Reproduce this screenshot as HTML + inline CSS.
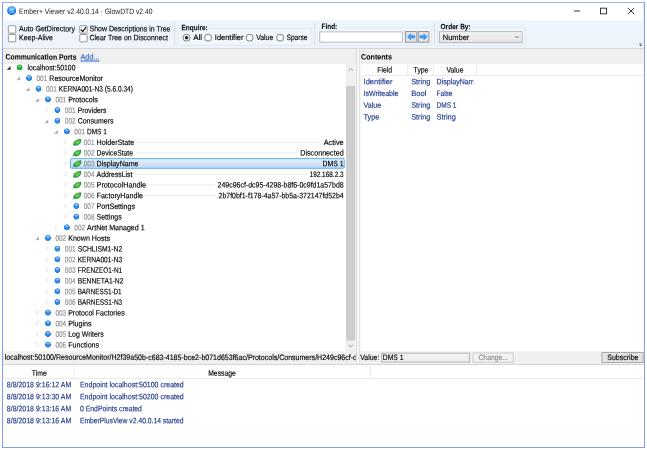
<!DOCTYPE html>
<html><head><meta charset="utf-8"><title>Ember+ Viewer</title>
<style>
html,body{margin:0;padding:0;background:#fff}
body{width:647px;height:450px;overflow:hidden;position:relative;font-family:"Liberation Sans",sans-serif;font-size:7.8px;line-height:10px}
div,span,body>svg{position:absolute;display:block}
#t{left:0;top:0;width:647px;height:450px;will-change:transform}
span{left:0;top:0;white-space:pre;transform-origin:0 0;-webkit-text-stroke:0.15px currentColor;text-rendering:geometricPrecision}
</style></head>
<body>
<svg style="left:0;top:0" width="647" height="450" viewBox="0 0 647 450"><defs><radialGradient id="bg" cx="0.5" cy="0.5" r="0.5"><stop offset="0" stop-color="#3f9af0"/><stop offset="0.62" stop-color="#2585e2"/><stop offset="0.8" stop-color="#1f78d6" stop-opacity="0.9"/><stop offset="1" stop-color="#1f78d6" stop-opacity="0"/></radialGradient><radialGradient id="gg" cx="0.5" cy="0.5" r="0.5"><stop offset="0" stop-color="#2ec03a"/><stop offset="0.62" stop-color="#1fae2e"/><stop offset="0.8" stop-color="#1ba02a" stop-opacity="0.9"/><stop offset="1" stop-color="#1ba02a" stop-opacity="0"/></radialGradient><radialGradient id="tg" cx="0.5" cy="0.45" r="0.6"><stop offset="0" stop-color="#6cc0fb"/><stop offset="0.6" stop-color="#2b8be8"/><stop offset="1" stop-color="#1763c2"/></radialGradient><radialGradient id="lg" cx="0.5" cy="0.45" r="0.6"><stop offset="0" stop-color="#74d45c"/><stop offset="0.6" stop-color="#4cba42"/><stop offset="1" stop-color="#2f9a30"/></radialGradient><linearGradient id="g1" x1="0" y1="0" x2="0" y2="1"><stop offset="0" stop-color="#e6eaf0"/><stop offset="0.5" stop-color="#cdcdcd"/><stop offset="1" stop-color="#e6e6e6"/></linearGradient><linearGradient id="g2" x1="0" y1="0" x2="0" y2="1"><stop offset="0" stop-color="#f3f3f3"/><stop offset="1" stop-color="#e4e4e4"/></linearGradient><linearGradient id="g3" x1="0" y1="0" x2="0" y2="1"><stop offset="0" stop-color="#e4f1fd"/><stop offset="1" stop-color="#bedcf8"/></linearGradient></defs>
<rect x="2" y="2" width="643" height="446" fill="#7da2e3"/>
<rect x="3" y="2.8" width="640.8" height="444" fill="#fff"/>
<svg x="7" y="6" width="9.3" height="9.3" viewBox="0 0 20 20"><circle cx="10" cy="10" r="9.7" fill="url(#tg)"/><ellipse cx="10" cy="5.6" rx="6.4" ry="3.6" fill="#fff" opacity="0.35"/><path d="M4 11C7 9 12 9.5 16 12M6 15C9 13.4 12 13.6 15 15.4" stroke="#bfe4ff" stroke-width="1.1" fill="none" opacity="0.7"/></svg>
<g stroke="#2e2e2e" stroke-width="0.95" fill="none"><path d="M573.9 11H580.1"/><rect x="600.5" y="8.2" width="6" height="5.6"/><path d="M627.8 8L634.2 14.1M634.2 8L627.8 14.1"/></g>
<rect x="2.8" y="20.4" width="640.4" height="27.9" fill="#eef4fb"/>
<rect x="3" y="47.9" width="641" height="1.7" fill="url(#g1)"/>
<rect x="3" y="49.5" width="641" height="314.9" fill="#f0f0f0"/>
<rect x="8.35" y="25.75" width="7.4" height="7.4" fill="#fff" stroke="#8a8a8a" stroke-width="0.9" rx="0.8"/>
<rect x="8.35" y="34.45" width="7.4" height="7.4" fill="#fff" stroke="#8a8a8a" stroke-width="0.9" rx="0.8"/>
<rect x="79.75" y="25.75" width="7.4" height="7.4" fill="#fff" stroke="#8a8a8a" stroke-width="0.9" rx="0.8"/>
<svg x="79.3" y="25.3" width="8.3" height="8.3" viewBox="0 0 12 12"><path d="M2.4 6L5 9L9.8 2.6" stroke="#1a1a1a" stroke-width="1.9" fill="none"/></svg>
<rect x="79.75" y="34.45" width="7.4" height="7.4" fill="#fff" stroke="#8a8a8a" stroke-width="0.9" rx="0.8"/>
<rect x="174.4" y="23" width="0.8" height="22.4" fill="#d2dae5"/>
<rect x="314.5" y="23" width="0.8" height="22.4" fill="#d2dae5"/>
<rect x="434.2" y="23" width="0.8" height="22.4" fill="#d2dae5"/>
<rect x="177.85" y="28.65" width="134.1" height="16.6" fill="#f1f6fc" stroke="#dde4ee" stroke-width="0.7" rx="1.5"/>
<rect x="180.5" y="27.3" width="28.5" height="2.5" fill="#eef4fb"/>
<rect x="317.65" y="27.85" width="113.8" height="17.6" fill="#f1f6fc" stroke="#dde4ee" stroke-width="0.7" rx="1.5"/>
<rect x="320" y="26.5" width="18.5" height="2.5" fill="#eef4fb"/>
<rect x="437.65" y="27.85" width="87.4" height="17.6" fill="#f1f6fc" stroke="#dde4ee" stroke-width="0.7" rx="1.5"/>
<rect x="439.5" y="26.5" width="32.5" height="2.5" fill="#eef4fb"/>
<circle cx="186.6" cy="37.7" r="3.5" fill="#fff" stroke="#606060" stroke-width="0.8"/>
<circle cx="186.6" cy="37.7" r="1.8" fill="#222"/>
<circle cx="208.1" cy="37.7" r="3.5" fill="#fff" stroke="#606060" stroke-width="0.8"/>
<circle cx="249.6" cy="37.7" r="3.5" fill="#fff" stroke="#606060" stroke-width="0.8"/>
<circle cx="280.1" cy="37.7" r="3.5" fill="#fff" stroke="#606060" stroke-width="0.8"/>
<rect x="319.8" y="31.9" width="82.5" height="10.3" fill="#fff" stroke="#a9adb5" stroke-width="0.8"/>
<rect x="405.3" y="31.6" width="11.6" height="10.6" fill="#dfe1e4" stroke="#7d838c" stroke-width="0.8"/>
<svg x="406.9" y="33.1" width="8.4" height="7.4" viewBox="0 0 10.6 9"><path d="M0.6 4.5L5 0.6V3H10V6H5V8.4Z" fill="#3a9df5" stroke="#2a84e0" stroke-width="0.5"/></svg>
<rect x="418.2" y="31.6" width="10.7" height="10.6" fill="#dfe1e4" stroke="#7d838c" stroke-width="0.8"/>
<svg x="419.35" y="33.1" width="8.4" height="7.4" viewBox="0 0 10.6 9"><path d="M10 4.5L5.6 0.6V3H0.6V6H5.6V8.4Z" fill="#3a9df5" stroke="#2a84e0" stroke-width="0.5"/></svg>
<rect x="439.5" y="31.7" width="82.6" height="11" fill="url(#g2)" stroke="#adadad" stroke-width="0.8"/>
<svg x="514.8" y="35.4" width="4.4" height="3.2" viewBox="0 0 10 7"><path d="M1 1L5 5.6L9 1" stroke="#555" stroke-width="1.6" fill="none"/></svg>
<svg x="638.8" y="42.6" width="3.6" height="4.4" viewBox="0 0 6.8 8.8"><path d="M0.6 1.4H6.2" stroke="#999" stroke-width="1.6"/><path d="M0.6 3.6H6.2L3.4 7.6Z" fill="#444"/></svg>
<rect x="3" y="64" width="343" height="287.2" fill="#fff"/>
<rect x="346" y="64" width="9.2" height="287.2" fill="#f0f0f0"/>
<rect x="355.2" y="64" width="1.2" height="287.2" fill="#f8f8f8"/>
<rect x="346" y="86" width="9.2" height="254.5" fill="#cdcdcd"/>
<svg x="348.1" y="67.8" width="5.4" height="3.4" viewBox="0 0 10.8 6.8"><path d="M1 5.8L5.4 1.4L9.8 5.8" stroke="#6a6a6a" stroke-width="1.3" fill="none"/></svg>
<svg x="348.1" y="344.2" width="5.4" height="3.4" viewBox="0 0 10.8 6.8"><path d="M1 1L5.4 5.4L9.8 1" stroke="#6a6a6a" stroke-width="1.3" fill="none"/></svg>
<rect x="356.5" y="49" width="0.8" height="315.4" fill="#c6c6c6"/>
<rect x="357.3" y="48.6" width="1.9" height="316.4" fill="#fbfbfb"/>
<rect x="359.2" y="49" width="0.8" height="315.4" fill="#dadada"/>
<rect x="3" y="364" width="641" height="1" fill="#d4d4d4"/>
<rect x="360.6" y="64.3" width="282.8" height="286.9" fill="#fff"/>
<rect x="360.4" y="75" width="283.2" height="0.7" fill="#e2e2e2"/>
<rect x="407.3" y="64.5" width="0.7" height="10.5" fill="#e2e2e2"/>
<rect x="432.9" y="64.5" width="0.7" height="10.5" fill="#e2e2e2"/>
<rect x="476" y="64.5" width="0.7" height="10.5" fill="#e2e2e2"/>
<svg x="6.5" y="65.7" width="4.4" height="4.2" viewBox="0 0 8 8"><path d="M7.6 0.4V7.6H0.4Z" fill="#262626"/></svg>
<svg x="16.3" y="64.1" width="6.6" height="6.6" viewBox="0 0 16 16"><circle cx="8" cy="8" r="8" fill="url(#gg)"/><ellipse cx="8" cy="4.9" rx="4.2" ry="2.2" fill="#fff" opacity="0.5"/></svg>
<svg x="15.95" y="76.36" width="4.4" height="4.2" viewBox="0 0 8 8"><path d="M7.6 0.4V7.6H0.4Z" fill="#a8a8a8"/></svg>
<svg x="25.75" y="74.76" width="6.6" height="6.6" viewBox="0 0 16 16"><circle cx="8" cy="8" r="8" fill="url(#bg)"/><ellipse cx="8" cy="4.9" rx="4.2" ry="2.2" fill="#fff" opacity="0.5"/></svg>
<svg x="25.4" y="87.03" width="4.4" height="4.2" viewBox="0 0 8 8"><path d="M7.6 0.4V7.6H0.4Z" fill="#a8a8a8"/></svg>
<svg x="35.2" y="85.43" width="6.6" height="6.6" viewBox="0 0 16 16"><circle cx="8" cy="8" r="8" fill="url(#bg)"/><ellipse cx="8" cy="4.9" rx="4.2" ry="2.2" fill="#fff" opacity="0.5"/></svg>
<svg x="34.85" y="97.69" width="4.4" height="4.2" viewBox="0 0 8 8"><path d="M7.6 0.4V7.6H0.4Z" fill="#a8a8a8"/></svg>
<svg x="44.65" y="96.09" width="6.6" height="6.6" viewBox="0 0 16 16"><circle cx="8" cy="8" r="8" fill="url(#bg)"/><ellipse cx="8" cy="4.9" rx="4.2" ry="2.2" fill="#fff" opacity="0.5"/></svg>
<svg x="45.4" y="107.35" width="3.4" height="5.4" viewBox="0 0 6.8 10.8"><path d="M1 1L5.8 5.4L1 9.8Z" fill="#fff" stroke="#d8d8d8" stroke-width="1.1"/></svg>
<svg x="54.1" y="106.75" width="6.6" height="6.6" viewBox="0 0 16 16"><circle cx="8" cy="8" r="8" fill="url(#bg)"/><ellipse cx="8" cy="4.9" rx="4.2" ry="2.2" fill="#fff" opacity="0.5"/></svg>
<svg x="44.3" y="119.02" width="4.4" height="4.2" viewBox="0 0 8 8"><path d="M7.6 0.4V7.6H0.4Z" fill="#a8a8a8"/></svg>
<svg x="54.1" y="117.42" width="6.6" height="6.6" viewBox="0 0 16 16"><circle cx="8" cy="8" r="8" fill="url(#bg)"/><ellipse cx="8" cy="4.9" rx="4.2" ry="2.2" fill="#fff" opacity="0.5"/></svg>
<svg x="53.75" y="129.68" width="4.4" height="4.2" viewBox="0 0 8 8"><path d="M7.6 0.4V7.6H0.4Z" fill="#a8a8a8"/></svg>
<svg x="63.55" y="128.08" width="6.6" height="6.6" viewBox="0 0 16 16"><circle cx="8" cy="8" r="8" fill="url(#bg)"/><ellipse cx="8" cy="4.9" rx="4.2" ry="2.2" fill="#fff" opacity="0.5"/></svg>
<svg x="64.3" y="139.34" width="3.4" height="5.4" viewBox="0 0 6.8 10.8"><path d="M1 1L5.8 5.4L1 9.8Z" fill="#fff" stroke="#d8d8d8" stroke-width="1.1"/></svg>
<svg x="72.2" y="138.74" width="9.2" height="7.9" viewBox="0 0 24 20"><path d="M4 15.2C2.6 8 9 2.2 23.2 1.2C23.8 9 19 16.2 11 16.8C8 17 6 16.4 4 15.2Z" fill="url(#lg)" stroke="#21782a" stroke-width="1.6"/><path d="M4.6 14.6L0.8 19.2" stroke="#2d7d2d" stroke-width="1.4" fill="none"/></svg>
<svg x="64.3" y="150" width="3.4" height="5.4" viewBox="0 0 6.8 10.8"><path d="M1 1L5.8 5.4L1 9.8Z" fill="#fff" stroke="#d8d8d8" stroke-width="1.1"/></svg>
<svg x="72.2" y="149.4" width="9.2" height="7.9" viewBox="0 0 24 20"><path d="M4 15.2C2.6 8 9 2.2 23.2 1.2C23.8 9 19 16.2 11 16.8C8 17 6 16.4 4 15.2Z" fill="url(#lg)" stroke="#21782a" stroke-width="1.6"/><path d="M4.6 14.6L0.8 19.2" stroke="#2d7d2d" stroke-width="1.4" fill="none"/></svg>
<rect x="70.42" y="158.64" width="273.85" height="9.65" fill="url(#g3)" stroke="#44a0f2" stroke-width="0.85" rx="1.2"/>
<svg x="64.3" y="160.67" width="3.4" height="5.4" viewBox="0 0 6.8 10.8"><path d="M1 1L5.8 5.4L1 9.8Z" fill="#fff" stroke="#d8d8d8" stroke-width="1.1"/></svg>
<svg x="72.2" y="160.07" width="9.2" height="7.9" viewBox="0 0 24 20"><path d="M4 15.2C2.6 8 9 2.2 23.2 1.2C23.8 9 19 16.2 11 16.8C8 17 6 16.4 4 15.2Z" fill="url(#lg)" stroke="#21782a" stroke-width="1.6"/><path d="M4.6 14.6L0.8 19.2" stroke="#2d7d2d" stroke-width="1.4" fill="none"/></svg>
<svg x="64.3" y="171.33" width="3.4" height="5.4" viewBox="0 0 6.8 10.8"><path d="M1 1L5.8 5.4L1 9.8Z" fill="#fff" stroke="#d8d8d8" stroke-width="1.1"/></svg>
<svg x="72.2" y="170.73" width="9.2" height="7.9" viewBox="0 0 24 20"><path d="M4 15.2C2.6 8 9 2.2 23.2 1.2C23.8 9 19 16.2 11 16.8C8 17 6 16.4 4 15.2Z" fill="url(#lg)" stroke="#21782a" stroke-width="1.6"/><path d="M4.6 14.6L0.8 19.2" stroke="#2d7d2d" stroke-width="1.4" fill="none"/></svg>
<svg x="64.3" y="181.99" width="3.4" height="5.4" viewBox="0 0 6.8 10.8"><path d="M1 1L5.8 5.4L1 9.8Z" fill="#fff" stroke="#d8d8d8" stroke-width="1.1"/></svg>
<svg x="72.2" y="181.39" width="9.2" height="7.9" viewBox="0 0 24 20"><path d="M4 15.2C2.6 8 9 2.2 23.2 1.2C23.8 9 19 16.2 11 16.8C8 17 6 16.4 4 15.2Z" fill="url(#lg)" stroke="#21782a" stroke-width="1.6"/><path d="M4.6 14.6L0.8 19.2" stroke="#2d7d2d" stroke-width="1.4" fill="none"/></svg>
<svg x="64.3" y="192.66" width="3.4" height="5.4" viewBox="0 0 6.8 10.8"><path d="M1 1L5.8 5.4L1 9.8Z" fill="#fff" stroke="#d8d8d8" stroke-width="1.1"/></svg>
<svg x="72.2" y="192.06" width="9.2" height="7.9" viewBox="0 0 24 20"><path d="M4 15.2C2.6 8 9 2.2 23.2 1.2C23.8 9 19 16.2 11 16.8C8 17 6 16.4 4 15.2Z" fill="url(#lg)" stroke="#21782a" stroke-width="1.6"/><path d="M4.6 14.6L0.8 19.2" stroke="#2d7d2d" stroke-width="1.4" fill="none"/></svg>
<svg x="64.3" y="203.32" width="3.4" height="5.4" viewBox="0 0 6.8 10.8"><path d="M1 1L5.8 5.4L1 9.8Z" fill="#fff" stroke="#d8d8d8" stroke-width="1.1"/></svg>
<svg x="73" y="202.72" width="6.6" height="6.6" viewBox="0 0 16 16"><circle cx="8" cy="8" r="8" fill="url(#bg)"/><ellipse cx="8" cy="4.9" rx="4.2" ry="2.2" fill="#fff" opacity="0.5"/></svg>
<svg x="64.3" y="213.98" width="3.4" height="5.4" viewBox="0 0 6.8 10.8"><path d="M1 1L5.8 5.4L1 9.8Z" fill="#fff" stroke="#d8d8d8" stroke-width="1.1"/></svg>
<svg x="73" y="213.38" width="6.6" height="6.6" viewBox="0 0 16 16"><circle cx="8" cy="8" r="8" fill="url(#bg)"/><ellipse cx="8" cy="4.9" rx="4.2" ry="2.2" fill="#fff" opacity="0.5"/></svg>
<svg x="54.85" y="224.65" width="3.4" height="5.4" viewBox="0 0 6.8 10.8"><path d="M1 1L5.8 5.4L1 9.8Z" fill="#fff" stroke="#d8d8d8" stroke-width="1.1"/></svg>
<svg x="63.55" y="224.04" width="6.6" height="6.6" viewBox="0 0 16 16"><circle cx="8" cy="8" r="8" fill="url(#bg)"/><ellipse cx="8" cy="4.9" rx="4.2" ry="2.2" fill="#fff" opacity="0.5"/></svg>
<svg x="34.85" y="236.31" width="4.4" height="4.2" viewBox="0 0 8 8"><path d="M7.6 0.4V7.6H0.4Z" fill="#a8a8a8"/></svg>
<svg x="44.65" y="234.71" width="6.6" height="6.6" viewBox="0 0 16 16"><circle cx="8" cy="8" r="8" fill="url(#bg)"/><ellipse cx="8" cy="4.9" rx="4.2" ry="2.2" fill="#fff" opacity="0.5"/></svg>
<svg x="45.4" y="245.97" width="3.4" height="5.4" viewBox="0 0 6.8 10.8"><path d="M1 1L5.8 5.4L1 9.8Z" fill="#fff" stroke="#d8d8d8" stroke-width="1.1"/></svg>
<svg x="54.1" y="245.37" width="6.6" height="6.6" viewBox="0 0 16 16"><circle cx="8" cy="8" r="8" fill="url(#bg)"/><ellipse cx="8" cy="4.9" rx="4.2" ry="2.2" fill="#fff" opacity="0.5"/></svg>
<svg x="45.4" y="256.63" width="3.4" height="5.4" viewBox="0 0 6.8 10.8"><path d="M1 1L5.8 5.4L1 9.8Z" fill="#fff" stroke="#d8d8d8" stroke-width="1.1"/></svg>
<svg x="54.1" y="256.03" width="6.6" height="6.6" viewBox="0 0 16 16"><circle cx="8" cy="8" r="8" fill="url(#bg)"/><ellipse cx="8" cy="4.9" rx="4.2" ry="2.2" fill="#fff" opacity="0.5"/></svg>
<svg x="45.4" y="267.3" width="3.4" height="5.4" viewBox="0 0 6.8 10.8"><path d="M1 1L5.8 5.4L1 9.8Z" fill="#fff" stroke="#d8d8d8" stroke-width="1.1"/></svg>
<svg x="54.1" y="266.7" width="6.6" height="6.6" viewBox="0 0 16 16"><circle cx="8" cy="8" r="8" fill="url(#bg)"/><ellipse cx="8" cy="4.9" rx="4.2" ry="2.2" fill="#fff" opacity="0.5"/></svg>
<svg x="45.4" y="277.96" width="3.4" height="5.4" viewBox="0 0 6.8 10.8"><path d="M1 1L5.8 5.4L1 9.8Z" fill="#fff" stroke="#d8d8d8" stroke-width="1.1"/></svg>
<svg x="54.1" y="277.36" width="6.6" height="6.6" viewBox="0 0 16 16"><circle cx="8" cy="8" r="8" fill="url(#bg)"/><ellipse cx="8" cy="4.9" rx="4.2" ry="2.2" fill="#fff" opacity="0.5"/></svg>
<svg x="45.4" y="288.62" width="3.4" height="5.4" viewBox="0 0 6.8 10.8"><path d="M1 1L5.8 5.4L1 9.8Z" fill="#fff" stroke="#d8d8d8" stroke-width="1.1"/></svg>
<svg x="54.1" y="288.02" width="6.6" height="6.6" viewBox="0 0 16 16"><circle cx="8" cy="8" r="8" fill="url(#bg)"/><ellipse cx="8" cy="4.9" rx="4.2" ry="2.2" fill="#fff" opacity="0.5"/></svg>
<svg x="45.4" y="299.29" width="3.4" height="5.4" viewBox="0 0 6.8 10.8"><path d="M1 1L5.8 5.4L1 9.8Z" fill="#fff" stroke="#d8d8d8" stroke-width="1.1"/></svg>
<svg x="54.1" y="298.69" width="6.6" height="6.6" viewBox="0 0 16 16"><circle cx="8" cy="8" r="8" fill="url(#bg)"/><ellipse cx="8" cy="4.9" rx="4.2" ry="2.2" fill="#fff" opacity="0.5"/></svg>
<svg x="35.95" y="309.95" width="3.4" height="5.4" viewBox="0 0 6.8 10.8"><path d="M1 1L5.8 5.4L1 9.8Z" fill="#fff" stroke="#d8d8d8" stroke-width="1.1"/></svg>
<svg x="44.65" y="309.35" width="6.6" height="6.6" viewBox="0 0 16 16"><circle cx="8" cy="8" r="8" fill="url(#bg)"/><ellipse cx="8" cy="4.9" rx="4.2" ry="2.2" fill="#fff" opacity="0.5"/></svg>
<svg x="35.95" y="320.61" width="3.4" height="5.4" viewBox="0 0 6.8 10.8"><path d="M1 1L5.8 5.4L1 9.8Z" fill="#fff" stroke="#d8d8d8" stroke-width="1.1"/></svg>
<svg x="44.65" y="320.01" width="6.6" height="6.6" viewBox="0 0 16 16"><circle cx="8" cy="8" r="8" fill="url(#bg)"/><ellipse cx="8" cy="4.9" rx="4.2" ry="2.2" fill="#fff" opacity="0.5"/></svg>
<svg x="35.95" y="331.27" width="3.4" height="5.4" viewBox="0 0 6.8 10.8"><path d="M1 1L5.8 5.4L1 9.8Z" fill="#fff" stroke="#d8d8d8" stroke-width="1.1"/></svg>
<svg x="44.65" y="330.67" width="6.6" height="6.6" viewBox="0 0 16 16"><circle cx="8" cy="8" r="8" fill="url(#bg)"/><ellipse cx="8" cy="4.9" rx="4.2" ry="2.2" fill="#fff" opacity="0.5"/></svg>
<svg x="35.95" y="341.94" width="3.4" height="5.4" viewBox="0 0 6.8 10.8"><path d="M1 1L5.8 5.4L1 9.8Z" fill="#fff" stroke="#d8d8d8" stroke-width="1.1"/></svg>
<svg x="44.65" y="341.34" width="6.6" height="6.6" viewBox="0 0 16 16"><circle cx="8" cy="8" r="8" fill="url(#bg)"/><ellipse cx="8" cy="4.9" rx="4.2" ry="2.2" fill="#fff" opacity="0.5"/></svg>
<rect x="381.7" y="353.1" width="87.7" height="8.9" fill="#f0f0f0" stroke="#a8a8a8" stroke-width="0.8"/>
<rect x="473.1" y="353" width="40.1" height="9.2" fill="#f2f2f2" stroke="#c4c4c4" stroke-width="0.8"/>
<rect x="601.9" y="352.6" width="41.2" height="10" fill="#e3e3e3" stroke="#9c9c9c" stroke-width="0.8"/>
<rect x="3" y="365" width="641" height="82" fill="#fff"/>
<rect x="3" y="378" width="641" height="0.7" fill="#e4e4e4"/>
<rect x="73.7" y="365.4" width="0.7" height="12.6" fill="#e4e4e4"/>
<rect x="370.2" y="365.4" width="0.7" height="12.6" fill="#e4e4e4"/>
<rect x="136.65" y="141.94" width="184.60" height="0.7" fill="#e2e2e2"/>
<rect x="135.45" y="152.60" width="162.30" height="0.7" fill="#e2e2e2"/>
<rect x="140.95" y="163.27" width="179.10" height="0.7" fill="#e2e2e2"/>
<rect x="134.95" y="173.93" width="172.10" height="0.7" fill="#e2e2e2"/>
<rect x="148.65" y="184.59" width="66.40" height="0.7" fill="#e2e2e2"/>
<rect x="145.45" y="195.26" width="70.60" height="0.7" fill="#e2e2e2"/>
</svg>
<div id="t">
<span style="color:#222;transform:translate(19.05px,6.90px) scaleX(0.8667) rotate(.03deg);-webkit-text-stroke:0;">Ember+ Viewer v2.40.0.14 - GlowDTD v2.40</span>
<span style="color:#000;transform:translate(19.05px,24.35px) scaleX(0.9021) rotate(.03deg);">Auto GetDirectory</span>
<span style="color:#000;transform:translate(19.05px,33.30px) scaleX(0.8988) rotate(.03deg);">Keep-Alive</span>
<span style="color:#000;transform:translate(89.55px,24.35px) scaleX(0.8932) rotate(.03deg);">Show Descriptions in Tree</span>
<span style="color:#000;transform:translate(89.55px,33.30px) scaleX(0.8911) rotate(.03deg);">Clear Tree on Disconnect</span>
<span style="color:#000;transform:translate(181.55px,23.20px) scaleX(0.8253) rotate(.03deg);font-weight:bold;-webkit-text-stroke:0.05px;">Enquire:</span>
<span style="color:#000;transform:translate(193.15px,33.00px) scaleX(1.0378) rotate(.03deg);">All</span>
<span style="color:#000;transform:translate(214.85px,33.00px) scaleX(0.9563) rotate(.03deg);">Identifier</span>
<span style="color:#000;transform:translate(256.15px,33.00px) scaleX(0.8826) rotate(.03deg);">Value</span>
<span style="color:#000;transform:translate(286.55px,33.00px) scaleX(0.8455) rotate(.03deg);">Sparse</span>
<span style="color:#000;transform:translate(321.55px,21.90px) scaleX(0.8236) rotate(.03deg);font-weight:bold;-webkit-text-stroke:0.05px;">Find:</span>
<span style="color:#000;transform:translate(440.55px,22.20px) scaleX(0.8368) rotate(.03deg);font-weight:bold;-webkit-text-stroke:0.05px;">Order By:</span>
<span style="color:#000;transform:translate(442.75px,32.90px) scaleX(0.9591) rotate(.03deg);">Number</span>
<span style="color:#000;transform:translate(5.55px,52.60px) scaleX(0.8751) rotate(.03deg);font-weight:bold;-webkit-text-stroke:0.05px;">Communication Ports</span>
<span style="color:#2a63d8;transform:translate(80.55px,52.60px) scaleX(0.9276) rotate(.03deg);text-decoration:underline;">Add...</span>
<span style="color:#000;transform:translate(361.05px,52.60px) scaleX(0.9143) rotate(.03deg);font-weight:bold;-webkit-text-stroke:0.05px;">Contents</span>
<span style="color:#000;transform:translate(377.30px,65.60px) scaleX(0.8750) rotate(.03deg);">Field</span>
<span style="color:#000;transform:translate(413.60px,65.60px) scaleX(0.8750) rotate(.03deg);">Type</span>
<span style="color:#000;transform:translate(446.52px,65.60px) scaleX(0.8750) rotate(.03deg);">Value</span>
<span style="color:#1c378a;transform:translate(363.55px,77.30px) scaleX(0.9664) rotate(.03deg);">Identifier</span>
<span style="color:#1c378a;transform:translate(411.25px,77.30px) scaleX(0.9325) rotate(.03deg);">String</span>
<div style="left:430px;top:76px;width:44px;height:14px;clip-path:inset(0 0.70px 0 0)"><span style="color:#1c378a;transform:translate(6.55px,1.30px) scaleX(0.9073) rotate(.03deg);">DisplayName</span></div>
<span style="color:#1c378a;transform:translate(363.55px,89.07px) scaleX(0.8981) rotate(.03deg);">IsWriteable</span>
<span style="color:#1c378a;transform:translate(411.25px,89.07px) scaleX(0.9674) rotate(.03deg);">Bool</span>
<span style="color:#1c378a;transform:translate(436.55px,89.07px) scaleX(0.8334) rotate(.03deg);">False</span>
<span style="color:#1c378a;transform:translate(363.55px,100.84px) scaleX(0.9084) rotate(.03deg);">Value</span>
<span style="color:#1c378a;transform:translate(411.25px,100.84px) scaleX(0.9325) rotate(.03deg);">String</span>
<span style="color:#1c378a;transform:translate(436.55px,100.84px) scaleX(0.8346) rotate(.03deg);">DMS 1</span>
<span style="color:#1c378a;transform:translate(363.55px,112.61px) scaleX(0.9405) rotate(.03deg);">Type</span>
<span style="color:#1c378a;transform:translate(411.25px,112.61px) scaleX(0.9325) rotate(.03deg);">String</span>
<span style="color:#1c378a;transform:translate(436.55px,112.61px) scaleX(0.9423) rotate(.03deg);">String</span>
<span style="color:#000;transform:translate(27.45px,63.25px) scaleX(0.8787) rotate(.03deg);">localhost:50100</span>
<span style="color:#8c8c8c;transform:translate(36.50px,73.91px) scaleX(0.8298) rotate(.03deg);">001</span>
<span style="color:#000;transform:translate(49.30px,73.91px) scaleX(0.9036) rotate(.03deg);">ResourceMonitor</span>
<span style="color:#8c8c8c;transform:translate(45.95px,84.58px) scaleX(0.8298) rotate(.03deg);">001</span>
<span style="color:#000;transform:translate(58.75px,84.58px) scaleX(0.8433) rotate(.03deg);">KERNA001-N3 (5.6.0.34)</span>
<span style="color:#8c8c8c;transform:translate(55.40px,95.24px) scaleX(0.8298) rotate(.03deg);">001</span>
<span style="color:#000;transform:translate(68.20px,95.24px) scaleX(0.9149) rotate(.03deg);">Protocols</span>
<span style="color:#8c8c8c;transform:translate(64.85px,105.90px) scaleX(0.8298) rotate(.03deg);">001</span>
<span style="color:#000;transform:translate(77.65px,105.90px) scaleX(0.8744) rotate(.03deg);">Providers</span>
<span style="color:#8c8c8c;transform:translate(64.85px,116.56px) scaleX(0.8298) rotate(.03deg);">002</span>
<span style="color:#000;transform:translate(77.65px,116.56px) scaleX(0.8978) rotate(.03deg);">Consumers</span>
<span style="color:#8c8c8c;transform:translate(74.30px,127.23px) scaleX(0.8298) rotate(.03deg);">001</span>
<span style="color:#000;transform:translate(87.10px,127.23px) scaleX(0.8241) rotate(.03deg);">DMS 1</span>
<span style="color:#8c8c8c;transform:translate(83.75px,137.89px) scaleX(0.8298) rotate(.03deg);">001</span>
<span style="color:#000;transform:translate(96.55px,137.89px) scaleX(0.9129) rotate(.03deg);">HolderState</span>
<span style="color:#000;transform:translate(323.75px,137.89px) scaleX(0.9372) rotate(.03deg);">Active</span>
<span style="color:#8c8c8c;transform:translate(83.75px,148.55px) scaleX(0.8298) rotate(.03deg);">002</span>
<span style="color:#000;transform:translate(96.55px,148.55px) scaleX(0.8657) rotate(.03deg);">DeviceState</span>
<span style="color:#000;transform:translate(300.25px,148.55px) scaleX(0.9185) rotate(.03deg);">Disconnected</span>
<span style="color:#8c8c8c;transform:translate(83.75px,159.22px) scaleX(0.8298) rotate(.03deg);">003</span>
<span style="color:#000;transform:translate(96.55px,159.22px) scaleX(0.9035) rotate(.03deg);">DisplayName</span>
<span style="color:#000;transform:translate(322.55px,159.22px) scaleX(0.8849) rotate(.03deg);">DMS 1</span>
<span style="color:#8c8c8c;transform:translate(83.75px,169.88px) scaleX(0.8298) rotate(.03deg);">004</span>
<span style="color:#000;transform:translate(96.55px,169.88px) scaleX(0.8810) rotate(.03deg);">AddressList</span>
<span style="color:#000;transform:translate(309.55px,169.88px) scaleX(0.8276) rotate(.03deg);">192.168.2.3</span>
<span style="color:#8c8c8c;transform:translate(83.75px,180.54px) scaleX(0.8298) rotate(.03deg);">005</span>
<span style="color:#000;transform:translate(96.55px,180.54px) scaleX(0.9304) rotate(.03deg);">ProtocolHandle</span>
<span style="color:#000;transform:translate(217.55px,180.54px) scaleX(0.8950) rotate(.03deg);">249c96cf-dc95-4298-b8f6-0c9fd1a57bd8</span>
<span style="color:#8c8c8c;transform:translate(83.75px,191.21px) scaleX(0.8298) rotate(.03deg);">006</span>
<span style="color:#000;transform:translate(96.55px,191.21px) scaleX(0.9151) rotate(.03deg);">FactoryHandle</span>
<span style="color:#000;transform:translate(218.55px,191.21px) scaleX(0.8906) rotate(.03deg);">2b7f0bf1-f178-4a57-bb5a-372147fd52b4</span>
<span style="color:#8c8c8c;transform:translate(83.75px,201.87px) scaleX(0.8298) rotate(.03deg);">007</span>
<span style="color:#000;transform:translate(96.55px,201.87px) scaleX(0.9039) rotate(.03deg);">PortSettings</span>
<span style="color:#8c8c8c;transform:translate(83.75px,212.53px) scaleX(0.8298) rotate(.03deg);">008</span>
<span style="color:#000;transform:translate(96.55px,212.53px) scaleX(0.8905) rotate(.03deg);">Settings</span>
<span style="color:#8c8c8c;transform:translate(74.30px,223.19px) scaleX(0.8298) rotate(.03deg);">002</span>
<span style="color:#000;transform:translate(87.10px,223.19px) scaleX(0.9094) rotate(.03deg);">ArtNet Managed 1</span>
<span style="color:#8c8c8c;transform:translate(55.40px,233.86px) scaleX(0.8298) rotate(.03deg);">002</span>
<span style="color:#000;transform:translate(68.20px,233.86px) scaleX(0.9088) rotate(.03deg);">Known Hosts</span>
<span style="color:#8c8c8c;transform:translate(64.85px,244.52px) scaleX(0.8298) rotate(.03deg);">001</span>
<span style="color:#000;transform:translate(77.65px,244.52px) scaleX(0.8630) rotate(.03deg);">SCHLISM1-N2</span>
<span style="color:#8c8c8c;transform:translate(64.85px,255.18px) scaleX(0.8298) rotate(.03deg);">002</span>
<span style="color:#000;transform:translate(77.65px,255.18px) scaleX(0.8486) rotate(.03deg);">KERNA001-N3</span>
<span style="color:#8c8c8c;transform:translate(64.85px,265.85px) scaleX(0.8298) rotate(.03deg);">003</span>
<span style="color:#000;transform:translate(77.65px,265.85px) scaleX(0.8217) rotate(.03deg);">FRENZEO1-N1</span>
<span style="color:#8c8c8c;transform:translate(64.85px,276.51px) scaleX(0.8298) rotate(.03deg);">004</span>
<span style="color:#000;transform:translate(77.65px,276.51px) scaleX(0.8616) rotate(.03deg);">BENNETA1-N2</span>
<span style="color:#8c8c8c;transform:translate(64.85px,287.17px) scaleX(0.8298) rotate(.03deg);">005</span>
<span style="color:#000;transform:translate(77.65px,287.17px) scaleX(0.8122) rotate(.03deg);">BARNESS1-D1</span>
<span style="color:#8c8c8c;transform:translate(64.85px,297.84px) scaleX(0.8298) rotate(.03deg);">006</span>
<span style="color:#000;transform:translate(77.65px,297.84px) scaleX(0.8215) rotate(.03deg);">BARNESS1-N3</span>
<span style="color:#8c8c8c;transform:translate(55.40px,308.50px) scaleX(0.8298) rotate(.03deg);">003</span>
<span style="color:#000;transform:translate(68.20px,308.50px) scaleX(0.8983) rotate(.03deg);">Protocol Factories</span>
<span style="color:#8c8c8c;transform:translate(55.40px,319.16px) scaleX(0.8298) rotate(.03deg);">004</span>
<span style="color:#000;transform:translate(68.20px,319.16px) scaleX(0.9168) rotate(.03deg);">Plugins</span>
<span style="color:#8c8c8c;transform:translate(55.40px,329.82px) scaleX(0.8298) rotate(.03deg);">005</span>
<span style="color:#000;transform:translate(68.20px,329.82px) scaleX(0.8922) rotate(.03deg);">Log Writers</span>
<span style="color:#8c8c8c;transform:translate(55.40px,340.49px) scaleX(0.8298) rotate(.03deg);">006</span>
<span style="color:#000;transform:translate(68.20px,340.49px) scaleX(0.9153) rotate(.03deg);">Functions</span>
<div style="left:3px;top:352px;width:353px;height:12px;clip-path:inset(0 0.40px 0 0)"><span style="color:#000;transform:translate(1.75px,0.80px) scaleX(0.9019) rotate(.03deg);">localhost:50100/ResourceMonitor/H2f39a50b-c683-4185-bce2-b071d653f6ac/Protocols/Consumers/H249c96cf-dc95-4298-b8f6-0c9fd1a57bd8/DisplayName</span></div>
<span style="color:#000;transform:translate(360.25px,353.00px) scaleX(0.8871) rotate(.03deg);">Value:</span>
<span style="color:#000;transform:translate(382.75px,353.00px) scaleX(0.8682) rotate(.03deg);">DMS 1</span>
<span style="color:#8e8e8e;transform:translate(478.41px,353.00px) scaleX(0.8750) rotate(.03deg);">Change...</span>
<span style="color:#000;transform:translate(607.25px,353.00px) scaleX(0.8999) rotate(.03deg);">Subscribe</span>
<span style="color:#000;transform:translate(31.84px,368.70px) scaleX(0.8750) rotate(.03deg);">Time</span>
<span style="color:#000;transform:translate(208.16px,368.70px) scaleX(0.8750) rotate(.03deg);">Message</span>
<span style="color:#1c378a;transform:translate(6.85px,380.30px) scaleX(0.8948) rotate(.03deg);">8/8/2018 9:16:12 AM</span>
<span style="color:#1c378a;transform:translate(79.95px,380.30px) scaleX(0.8968) rotate(.03deg);">Endpoint localhost:50100 created</span>
<span style="color:#1c378a;transform:translate(6.85px,392.25px) scaleX(0.8948) rotate(.03deg);">8/8/2018 9:13:30 AM</span>
<span style="color:#1c378a;transform:translate(79.95px,392.25px) scaleX(0.8968) rotate(.03deg);">Endpoint localhost:50200 created</span>
<span style="color:#1c378a;transform:translate(6.85px,404.20px) scaleX(0.8948) rotate(.03deg);">8/8/2018 9:13:16 AM</span>
<span style="color:#1c378a;transform:translate(79.95px,404.20px) scaleX(0.8830) rotate(.03deg);">0 EndPoints created</span>
<span style="color:#1c378a;transform:translate(6.85px,416.15px) scaleX(0.8948) rotate(.03deg);">8/8/2018 9:13:16 AM</span>
<span style="color:#1c378a;transform:translate(79.95px,416.15px) scaleX(0.8662) rotate(.03deg);">EmberPlusView v2.40.0.14 started</span>
</div>
</body></html>
